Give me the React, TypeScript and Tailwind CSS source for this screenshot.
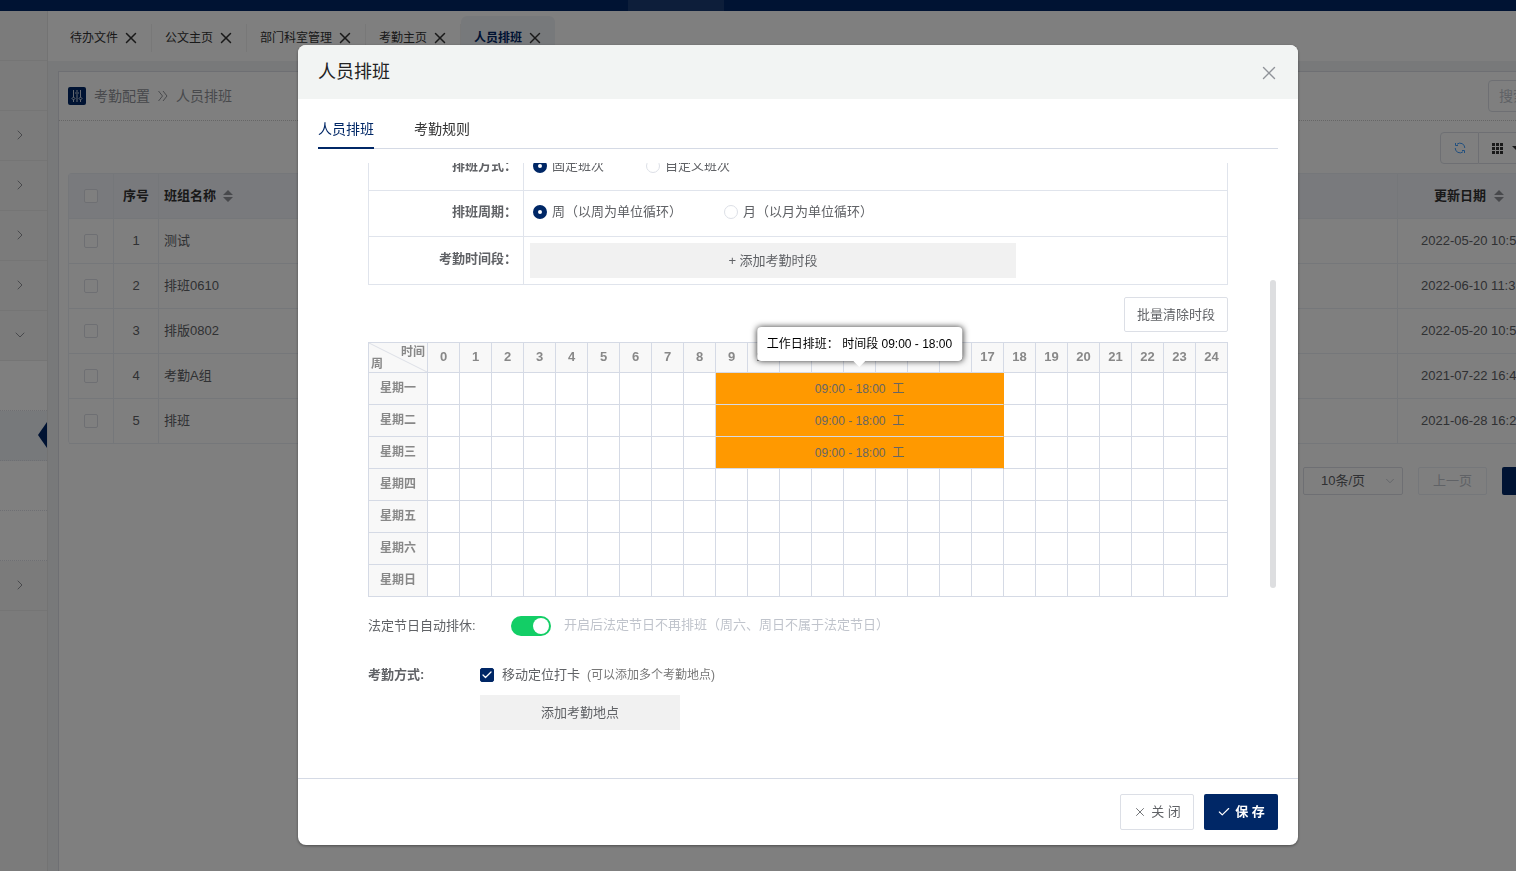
import { useState } from "react";
import { Check, ChevronDown, ChevronRight, X } from "lucide-react";
import clsx from "clsx";

const PAGE_TABS = ["待办文件", "公文主页", "部门科室管理", "考勤主页", "人员排班"];

const GROUPS = [
  { name: "测试", updated: "2022-05-20 10:52:16" },
  { name: "排班0610", updated: "2022-06-10 11:32:40" },
  { name: "排版0802", updated: "2022-05-20 10:51:08" },
  { name: "考勤A组", updated: "2021-07-22 16:40:25" },
  { name: "排班", updated: "2021-06-28 16:25:31" },
];

type SideItem = { kind: "plain" | "closed" | "open" | "child" | "active" };

const SIDE_ITEMS: SideItem[] = [
  { kind: "plain" },
  { kind: "plain" },
  { kind: "closed" },
  { kind: "closed" },
  { kind: "closed" },
  { kind: "closed" },
  { kind: "open" },
  { kind: "child" },
  { kind: "active" },
  { kind: "child" },
  { kind: "child" },
  { kind: "closed" },
];

const WEEK = ["星期一", "星期二", "星期三", "星期四", "星期五", "星期六", "星期日"];
const HOURS = Array.from({ length: 25 }, (_, i) => i);
const SHIFT_START = 9;
const SHIFT_SPAN = 9;

function SortIcon() {
  return (
    <svg width="10" height="12" viewBox="0 0 10 12" className="fill-[#909399]" aria-hidden="true">
      <path d="M0 5L5 0l5 5zM0 7h10l-5 5z" />
    </svg>
  );
}

function SlidersIcon() {
  return (
    <svg width="18" height="18" viewBox="0 0 18 18" fill="none" stroke="#fff" aria-hidden="true">
      <rect width="18" height="18" rx="2" fill="#002766" stroke="none" />
      <path d="M5.5 3v7M5.5 13v2M9 3v1M9 8v7M12.5 3v7M12.5 13v2" strokeWidth="0.8" />
      <path d="M5.500 10l1.500 1.500-1.500 1.500L4 11.500zM9 4.500L10.500 6 9 7.500 7.500 6zM12.500 10l1.500 1.500-1.500 1.500-1.500-1.500z" strokeWidth="0.8" />
    </svg>
  );
}

function DoubleChevron() {
  return (
    <svg
      width="10"
      height="12"
      viewBox="0 0 10 12"
      fill="none"
      stroke="currentColor"
      className="mx-2"
      aria-hidden="true"
    >
      <path d="M0.500 1l4 5-4 5M5 1l4 5-4 5" />
    </svg>
  );
}

function RefreshIcon() {
  return (
    <svg width="12" height="12" viewBox="0 0 12 12" fill="none" stroke="#409eff" aria-hidden="true">
      <path d="M3 2.200A4.800 4.800 0 0 1 10.800 6M9 9.800A4.800 4.800 0 0 1 1.200 6" />
      <path d="M1.500 1v2.500H4M10.500 11V8.500H8" />
    </svg>
  );
}

function GridIcon() {
  return (
    <svg width="11" height="11" viewBox="0 0 11 11" className="fill-[#333]" aria-hidden="true">
      <path d="M0 0h3v3H0zM4 0h3v3H4zM8 0h3v3H8zM0 4h3v3H0zM4 4h3v3H4zM8 4h3v3H8zM0 8h3v3H0zM4 8h3v3H4zM8 8h3v3H8z" />
    </svg>
  );
}

function Sidebar() {
  return (
    <aside className="w-12 shrink-0 border-r border-[#e6e6e6] bg-[#f6f6f6]">
      {SIDE_ITEMS.map(({ kind }, i) => (
        <div
          key={i}
          className={clsx(
            "relative flex h-[50px] items-center border-b pb-[2px] pl-3 text-[#909399]",
            kind === "child" && "border-dotted border-[#dcdfe6] bg-white",
            kind === "active" && "border-dotted border-[#dcdfe6] bg-[#eff2f7]",
            kind !== "child" && kind !== "active" && "border-[#ebebeb]",
          )}
        >
          {kind === "closed" && <ChevronRight size={16} strokeWidth={1.5} />}
          {kind === "open" && <ChevronDown size={16} strokeWidth={1.5} />}
          {kind === "active" && (
            <svg width="9" height="26" viewBox="0 0 9 26" className="absolute right-0 fill-[#002766]">
              <path d="M9 0v26L0 13z" />
            </svg>
          )}
        </div>
      ))}
    </aside>
  );
}

function PageTabs() {
  return (
    <nav className="flex h-[50px] items-end bg-white pl-[9px]">
      {PAGE_TABS.map((tab, i) => {
        const active = i === PAGE_TABS.length - 1;
        return (
          <div
            key={tab}
            className={clsx(
              "flex h-[45px] items-center pb-[2px] pl-[13px]",
              active ? "rounded-t-md bg-[#eff2f7] font-bold text-[#002766]" : "text-[#333]",
            )}
          >
            <a href="#" className="text-xs">
              {tab}
            </a>
            <button type="button" aria-label={`关闭${tab}`} className="ml-1 mr-[11px] text-[#333]">
              <X size={18} strokeWidth={2} />
            </button>
            {!active && <span className="h-7 w-px bg-[#f0f0f0]" />}
          </div>
        );
      })}
    </nav>
  );
}

function RowCheckbox({ label }: { label: string }) {
  return (
    <input
      type="checkbox"
      aria-label={label}
      className="block size-[14px] appearance-none rounded-xs border border-[#dcdfe6] bg-white"
    />
  );
}

function GroupTable() {
  const cell = "h-[45px] border-r border-b border-[#ebeef5] p-0";
  return (
    <table className="mt-[9px] w-full table-fixed border-separate border-spacing-0 rounded-sm border-t border-l border-[#ebeef5] text-[13px] text-[#606266]">
      <colgroup>
        <col className="w-[45px]" />
        <col className="w-[45px]" />
        <col />
        <col className="w-[179px]" />
      </colgroup>
      <thead>
        <tr className="bg-[#f3f5fb] text-left text-[#333]">
          <th className={clsx(cell, "pl-[15px]")}>
            <RowCheckbox label="全选" />
          </th>
          <th className={clsx(cell, "text-center")}>序号</th>
          <th className={clsx(cell, "pl-[5px]")}>
            <span className="flex items-center gap-[7px]">
              班组名称 <SortIcon />
            </span>
          </th>
          <th className={clsx(cell, "pl-9")}>
            <span className="flex items-center gap-2">
              更新日期 <SortIcon />
            </span>
          </th>
        </tr>
      </thead>
      <tbody>
        {GROUPS.map((group, i) => (
          <tr key={group.name}>
            <td className={clsx(cell, "pl-[15px]")}>
              <RowCheckbox label={`选择${group.name}`} />
            </td>
            <td className={clsx(cell, "text-center")}>{i + 1}</td>
            <td className={clsx(cell, "pl-[5px]")}>{group.name}</td>
            <td className={clsx(cell, "pl-[23px] whitespace-nowrap")}>{group.updated}</td>
          </tr>
        ))}
      </tbody>
    </table>
  );
}

function Pagination() {
  return (
    <div className="mt-[23px] flex justify-end gap-[15px] pr-[45px] text-[13px] text-[#606266]">
      <div className="relative">
        <select
          aria-label="每页条数"
          className="h-7 w-[100px] appearance-none rounded-xs border border-[#dcdfe6] bg-white pl-[17px]"
        >
          <option>10条/页</option>
        </select>
        <ChevronDown size={14} strokeWidth={1.5} className="absolute top-[7px] right-[6px] text-[#c0c4cc]" />
      </div>
      <button type="button" disabled className="h-7 w-[69px] rounded-xs border border-[#ebeef5] text-[#c0c4cc]">
        上一页
      </button>
      <button type="button" aria-label="第1页" className="h-7 w-[30px] rounded-xs bg-[#002766]" />
    </div>
  );
}

function ListPage() {
  return (
    <section className="mt-[10px] mr-[10px] ml-[10px] flex-1 border-t border-l border-[#dcdfe6] bg-white">
      <div className="flex h-[49px] items-center border-b border-dotted border-[#ccc] px-[9px] text-sm text-[#909399]">
        <SlidersIcon />
        <a href="#" className="ml-2">
          考勤配置
        </a>
        <DoubleChevron />
        <span>人员排班</span>
        <input
          type="search"
          placeholder="搜索"
          aria-label="搜索"
          className="ml-auto h-8 w-[89px] rounded-sm border border-[#dcdfe6] px-[10px] text-sm placeholder:text-[#c0c4cc]"
        />
      </div>
      <div className="px-[9px] pt-[11px]">
        <div className="flex justify-end">
          <button
            type="button"
            aria-label="刷新"
            className="flex h-8 w-[39px] items-center justify-center rounded-l-sm border border-[#dcdfe6]"
          >
            <RefreshIcon />
          </button>
          <button
            type="button"
            aria-label="列设置"
            className="flex h-8 w-[98px] items-center gap-[9px] rounded-r-sm border border-l-0 border-[#dcdfe6] pl-[13px]"
          >
            <GridIcon />
            <svg width="8" height="4" viewBox="0 0 8 4" className="fill-[#333]" aria-hidden="true">
              <path d="M0 0h8L4 4z" />
            </svg>
          </button>
        </div>
        <GroupTable />
        <Pagination />
      </div>
    </section>
  );
}

type RadioRowProps = {
  label: string;
  name: string;
  options: string[];
};

function RadioRow({ label, name, options }: RadioRowProps) {
  const [value, setValue] = useState(options[0]);
  return (
    <div className="flex h-[46px] border-b border-[#e0e4ec]">
      <FormLabel>{label}</FormLabel>
      <div className="flex items-center gap-[42px] pb-[3px] pl-[9px]">
        {options.map((option) => (
          <label key={option} className="flex items-center gap-[5px]">
            <input
              type="radio"
              name={name}
              checked={value === option}
              onChange={() => setValue(option)}
              className="size-[14px] appearance-none rounded-full border border-[#dcdfe6] bg-white checked:border-[5px] checked:border-[#002766]"
            />
            {option}
          </label>
        ))}
      </div>
    </div>
  );
}

function FormLabel({ children }: { children: string }) {
  return (
    <div className="flex w-[155px] shrink-0 items-center justify-end border-r border-[#e0e4ec] pr-[6px] pb-[3px] font-bold">
      {children}
    </div>
  );
}

function ShiftTooltip() {
  return (
    <div
      role="tooltip"
      className="absolute bottom-full left-1/2 z-10 mb-3 flex h-[34px] -translate-x-1/2 items-center rounded-sm bg-white px-[10px] whitespace-nowrap text-black shadow-[0_0_6px_rgba(0,0,0,0.8)]"
    >
      工作日排班： 时间段 09:00 - 18:00
      <svg width="12" height="6" viewBox="0 0 12 6" className="absolute top-full left-1/2 -translate-x-1/2 fill-white">
        <path d="M0 0h12L6 6z" />
      </svg>
    </div>
  );
}

function ScheduleTable() {
  const line = "border-r border-b border-[#d5dae5] p-0";
  const head = "bg-[#f8f8f8] text-[#888]";
  return (
    <table className="mt-[10px] w-full table-fixed border-separate border-spacing-0 border-t border-l border-[#d5dae5] text-xs">
      <colgroup>
        <col className="w-[59px]" />
        {HOURS.map((h) => (
          <col key={h} />
        ))}
      </colgroup>
      <thead>
        <tr>
          <th className={clsx(line, head, "relative h-[30px]")}>
            <svg
              viewBox="0 0 59 30"
              preserveAspectRatio="none"
              className="absolute inset-0 size-full stroke-[#dcdfe6]"
              aria-hidden="true"
            >
              <path d="M0 0L59 30" />
            </svg>
            <span className="relative flex h-[29px] flex-col justify-between leading-none">
              <span className="pt-[3px] pr-[2px] text-right">时间</span>
              <span className="pb-[2px] pl-[2px] text-left">周</span>
            </span>
          </th>
          {HOURS.map((h) => (
            <th key={h} className={clsx(line, head, "pb-px text-[13px]")}>
              {h}
            </th>
          ))}
        </tr>
      </thead>
      <tbody>
        {WEEK.map((day, i) => {
          const hasShift = i < 3;
          return (
            <tr key={day}>
              <th className={clsx(line, head, "h-8 pb-[2px]")}>{day}</th>
              {HOURS.map((h) => {
                if (hasShift && h === SHIFT_START) {
                  return (
                    <td
                      key={h}
                      colSpan={SHIFT_SPAN}
                      className="relative border-r border-b border-r-[#ff9900] border-b-[#d5dae5] bg-[#ff9900] p-0 text-center text-[#666]"
                    >
                      09:00 - 18:00&nbsp; 工
                      {i === 0 && <ShiftTooltip />}
                    </td>
                  );
                }
                if (hasShift && h > SHIFT_START && h < SHIFT_START + SHIFT_SPAN) {
                  return null;
                }
                return <td key={h} className={line} />;
              })}
            </tr>
          );
        })}
      </tbody>
    </table>
  );
}

function ScheduleForm() {
  const [holidayOff, setHolidayOff] = useState(true);
  const [mobile, setMobile] = useState(true);

  return (
    <div className="-mt-[18px] min-w-0 flex-1 text-[13px] text-[#606266]">
      <div className="border-x border-[#e0e4ec]">
        <RadioRow label="排班方式：" name="mode" options={["固定班次", "自定义班次"]} />
        <RadioRow label="排班周期：" name="cycle" options={["周（以周为单位循环）", "月（以月为单位循环）"]} />
        <div className="flex h-12 border-b border-[#e0e4ec]">
          <FormLabel>考勤时间段：</FormLabel>
          <div className="flex flex-1 items-center pl-[6px]">
            <button type="button" className="h-[35px] w-[70%] max-w-[486px] bg-[#f1f1f1]">
              + 添加考勤时段
            </button>
          </div>
        </div>
      </div>
      <div className="mt-3 flex justify-end">
        <button type="button" className="h-[35px] rounded-xs border border-[#dcdfe6] px-3">
          批量清除时段
        </button>
      </div>
      <ScheduleTable />
      <div className="mt-[18px] flex h-[22px] items-center">
        <label htmlFor="holiday" className="w-[143px]">
          法定节日自动排休:
        </label>
        <input
          id="holiday"
          type="checkbox"
          role="switch"
          checked={holidayOff}
          onChange={(e) => setHolidayOff(e.target.checked)}
          className="flex h-5 w-10 appearance-none items-center rounded-full bg-[#dcdfe6] px-[2px] before:size-4 before:rounded-full before:bg-white checked:justify-end checked:bg-[#13ce66]"
        />
        <span className="ml-[13px] pb-[2px] text-[#c0c4cc]">开启后法定节日不再排班（周六、周日不属于法定节日）</span>
      </div>
      <div className="mt-7 flex pb-12">
        <span className="w-28 leading-5 font-bold">考勤方式:</span>
        <div>
          <div className="flex h-5 items-center">
            <span className="relative flex size-[14px]">
              <input
                id="mobile"
                type="checkbox"
                checked={mobile}
                onChange={(e) => setMobile(e.target.checked)}
                className="size-[14px] appearance-none rounded-xs border border-[#dcdfe6] checked:border-[#002766] checked:bg-[#002766]"
              />
              <Check size={12} strokeWidth={2.5} className="pointer-events-none absolute inset-px text-white" />
            </span>
            <label htmlFor="mobile" className="ml-2">
              移动定位打卡
            </label>
            <span className="ml-[7px] text-xs text-[#777]">(可以添加多个考勤地点)</span>
          </div>
          <button type="button" className="mt-[10px] h-[35px] w-[200px] bg-[#f1f1f1]">
            添加考勤地点
          </button>
        </div>
      </div>
    </div>
  );
}

function ScheduleDialog() {
  return (
    <div
      role="dialog"
      aria-label="人员排班"
      className="w-full max-w-[1000px] overflow-hidden rounded-lg bg-white shadow-[0_1px_3px_rgba(0,0,0,0.4)]"
    >
      <header className="flex h-[54px] items-center justify-between bg-[#f2f4f3] pr-[18px] pl-5 text-lg text-[#222]">
        <h2>人员排班</h2>
        <button type="button" aria-label="关闭弹窗" className="pt-px text-[#909399]">
          <X size={22} strokeWidth={1.5} />
        </button>
      </header>
      <div className="mx-5 flex h-[50px] gap-10 border-b border-[#d5dae5] pt-[10px] text-sm" role="tablist">
        <button type="button" role="tab" aria-selected className="h-10 border-b-2 border-[#002766] pt-px text-[#002766]">
          人员排班
        </button>
        <button
          type="button"
          role="tab"
          aria-selected={false}
          className="h-10 border-b-2 border-transparent pt-px text-[#333]"
        >
          考勤规则
        </button>
      </div>
      <div className="mt-[14px] flex overflow-hidden pr-[22px] pl-[70px]">
        <ScheduleForm />
        <div className="mt-[117px] ml-[42px] h-[308px] w-[6px] shrink-0 rounded-full bg-[#dddee0]" />
      </div>
      <footer className="flex justify-end gap-[10px] border-t border-[#d5dae5] px-5 py-[15px] text-[13px]">
        <button
          type="button"
          className="flex h-9 w-[74px] items-center justify-center gap-1 rounded-xs border border-[#dcdfe6] text-[#606266]"
        >
          <X size={14} strokeWidth={1.5} />关 闭
        </button>
        <button
          type="button"
          className="flex h-9 w-[74px] items-center justify-center gap-1 rounded-xs bg-[#002766] font-bold text-white"
        >
          <Check size={14} strokeWidth={2} />保 存
        </button>
      </footer>
    </div>
  );
}

export default function App() {
  return (
    <div className="h-screen overflow-hidden font-['Liberation_Sans','Noto_Sans_CJK_SC',sans-serif]">
      {/* the page keeps 80px past the right edge, the dialog centres on that wider page */}
      <div className="-mr-20 flex h-full flex-col bg-[#f0f2f5]">
        <div className="flex h-[11px] shrink-0 bg-[#002766]">
          <div className="ml-[628px] w-24 bg-white/10" />
        </div>
        <div className="flex min-h-0 flex-1">
          <Sidebar />
          <main className="flex min-w-0 flex-1 flex-col">
            <PageTabs />
            <ListPage />
          </main>
        </div>
      </div>
      <div className="fixed inset-0 flex items-start justify-center bg-black/50 pt-[45px] pl-20">
        <ScheduleDialog />
      </div>
    </div>
  );
}
